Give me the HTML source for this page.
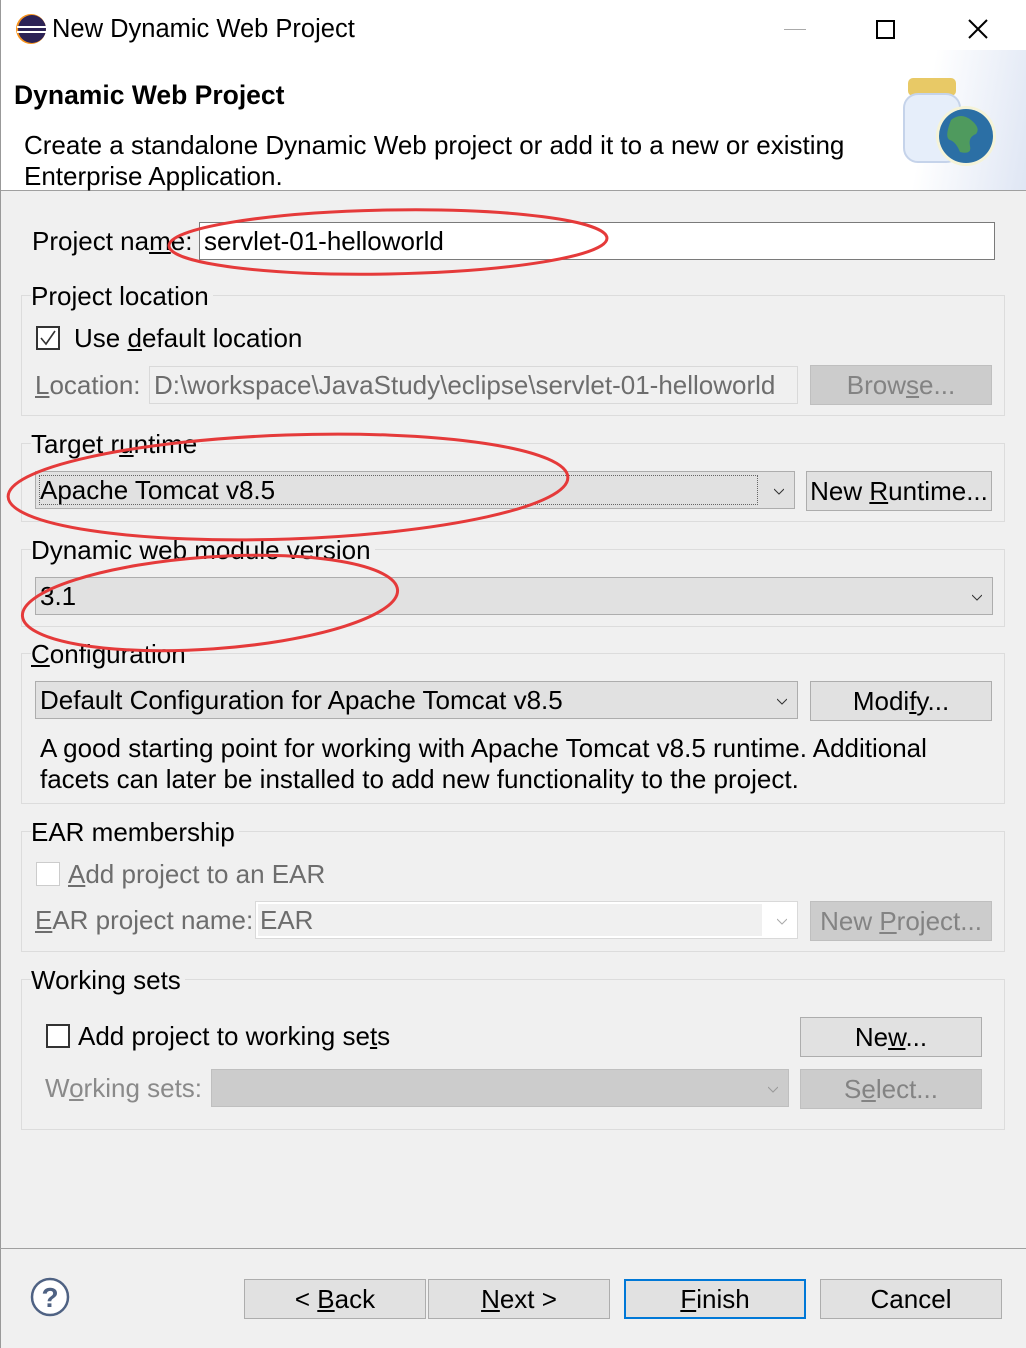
<!DOCTYPE html>
<html><head><meta charset="utf-8"><style>
*{box-sizing:border-box;margin:0;padding:0}
body{width:1026px;height:1348px;background:#f0f0f0;font-family:"Liberation Sans",sans-serif;font-size:26px;color:#000;position:relative;overflow:hidden}
.a{position:absolute;white-space:nowrap}
.t{position:absolute;white-space:nowrap;line-height:30px;transform:translateY(-15px)}
.g{position:absolute;border:1px solid #dcdcdc;left:21px;width:984px}
.gl{position:absolute;left:31px;background:#f0f0f0;padding-right:4px;line-height:30px}
.btn{position:absolute;background:#e1e1e1;border:1px solid #adadad;text-align:center;line-height:38px}
.dis{background:#cccccc;border-color:#bfbfbf;color:#838383}
.combo{position:absolute;background:#e1e1e1;border:1px solid #adadad;padding-left:4px;line-height:36px}
.arr{position:absolute;right:10px;top:14px;width:10px;height:10px}
.gray{color:#6d6d6d}
u{text-decoration:underline;text-underline-offset:2px}
</style></head><body>
<div class="a" style="left:0;top:0;width:1026px;height:191px;background:#fff;border-bottom:1px solid #a0a0a0"></div>
<div class="a" style="left:0;top:0;width:1px;height:1348px;background:#999"></div>
<div class="a" style="left:860px;top:50px;width:166px;height:140px;background:linear-gradient(100deg,#fff 40%,#dfe6f4 100%)"></div>
<!-- title bar -->
<svg class="a" style="left:15px;top:13px" width="32" height="32"><circle cx="16" cy="16" r="15" fill="#f7941e"/><circle cx="17" cy="16" r="14" fill="#2c2255"/><rect x="2" y="13" width="30" height="2" fill="#fff"/><rect x="2" y="18" width="30" height="2" fill="#fff"/></svg>
<div class="t" style="left:52px;top:29px;font-size:25.5px">New Dynamic Web Project</div>
<div class="a" style="left:784px;top:29px;width:22px;height:1px;background:#aaa"></div>
<div class="a" style="left:876px;top:20px;width:19px;height:19px;border:2px solid #000"></div>
<svg class="a" style="left:967px;top:18px" width="22" height="22"><path d="M2 2L20 20M20 2L2 20" stroke="#000" stroke-width="2"/></svg>
<div class="t" style="left:14px;top:95px;font-weight:bold;font-size:26.5px">Dynamic Web Project</div>
<div class="t" style="left:24px;top:145px">Create a standalone Dynamic Web project or add it to a new or existing</div>
<div class="t" style="left:24px;top:176px">Enterprise Application.</div>
<svg class="a" style="left:896px;top:72px" width="106" height="102">
<rect x="12" y="6" width="48" height="18" rx="5" fill="#e8c966"/>
<rect x="8" y="22" width="56" height="68" rx="14" fill="#e6eefa" stroke="#c5d3ea" stroke-width="2"/>
<circle cx="70" cy="64" r="30" fill="#f5f3d8"/>
<circle cx="70" cy="64" r="27" fill="#2b6fa5"/>
<path d="M55 48q10-8 20 0t5 14q-8 3-6 12t-10 6q-4-10-10-12t1-20z" fill="#4f9a5e"/>
</svg>
<!-- project name -->
<div class="t" style="left:32px;top:241px">Project na<u>m</u>e:</div>
<div class="a" style="left:199px;top:222px;width:796px;height:38px;background:#fff;border:1px solid #7a7a7a;padding-left:4px;line-height:36px">servlet-01-helloworld</div>
<!-- project location -->
<div class="g" style="top:295px;height:121px"></div>
<div class="gl" style="top:281px">Project location</div>
<div class="a" style="left:36px;top:326px;width:24px;height:24px;border:2px solid #333;background:#fff"></div>
<svg class="a" style="left:38px;top:328px" width="20" height="20"><path d="M3 10l5 6L17 3" stroke="#333" stroke-width="1.6" fill="none"/></svg>
<div class="t" style="left:74px;top:338px">Use <u>d</u>efault location</div>
<div class="t gray" style="left:35px;top:385px"><u>L</u>ocation:</div>
<div class="a gray" style="left:149px;top:366px;width:649px;height:38px;border:1px solid #d9d9d9;padding-left:4px;line-height:36px;overflow:hidden">D:\workspace\JavaStudy\eclipse\servlet-01-helloworld</div>
<div class="btn dis" style="left:810px;top:365px;width:182px;height:40px">Brow<u>s</u>e...</div>
<!-- target runtime -->
<div class="g" style="top:443px;height:79px"></div>
<div class="gl" style="top:429px">Target r<u>u</u>ntime</div>
<div class="combo" style="left:35px;top:471px;width:760px;height:38px"><div style="position:absolute;left:3px;top:3px;right:36px;bottom:3px;border:1px dotted #666"></div>Apache Tomcat v8.5<svg class="arr" viewBox="0 0 10 10"><path d="M0 3l5 5 5-5" stroke="#333" fill="none"/></svg></div>
<div class="btn" style="left:806px;top:471px;width:186px;height:40px">New <u>R</u>untime...</div>
<!-- module version -->
<div class="g" style="top:549px;height:78px"></div>
<div class="gl" style="top:535px">Dynamic web module version</div>
<div class="combo" style="left:35px;top:577px;width:958px;height:38px">3.1<svg class="arr" viewBox="0 0 10 10"><path d="M0 3l5 5 5-5" stroke="#333" fill="none"/></svg></div>
<!-- configuration -->
<div class="g" style="top:653px;height:151px"></div>
<div class="gl" style="top:639px"><u>C</u>onfiguration</div>
<div class="combo" style="left:35px;top:681px;width:763px;height:38px">Default Configuration for Apache Tomcat v8.5<svg class="arr" viewBox="0 0 10 10"><path d="M0 3l5 5 5-5" stroke="#333" fill="none"/></svg></div>
<div class="btn" style="left:810px;top:681px;width:182px;height:40px">Modi<u>f</u>y...</div>
<div class="t" style="left:40px;top:748px">A good starting point for working with Apache Tomcat v8.5 runtime. Additional</div>
<div class="t" style="left:40px;top:779px">facets can later be installed to add new functionality to the project.</div>
<!-- EAR -->
<div class="g" style="top:831px;height:121px"></div>
<div class="gl" style="top:817px">EAR membership</div>
<div class="a" style="left:36px;top:862px;width:24px;height:24px;border:1px solid #ccc;background:#fff"></div>
<div class="t gray" style="left:68px;top:874px"><u>A</u>dd project to an EAR</div>
<div class="t gray" style="left:35px;top:920px"><u>E</u>AR project name:</div>
<div class="a" style="left:255px;top:901px;width:543px;height:38px;border:1px solid #d9d9d9;background:#fff"><div style="position:absolute;left:2px;top:2px;width:504px;height:32px;background:#f0f0f0;padding-left:2px;line-height:32px;color:#6d6d6d">EAR</div><svg class="arr" viewBox="0 0 10 10"><path d="M0 3l5 5 5-5" stroke="#aaa" fill="none"/></svg></div>
<div class="btn dis" style="left:810px;top:901px;width:182px;height:40px">New <u>P</u>roject...</div>
<!-- working sets -->
<div class="g" style="top:979px;height:151px"></div>
<div class="gl" style="top:965px">Working sets</div>
<div class="a" style="left:46px;top:1024px;width:24px;height:24px;border:2px solid #333;background:#fff"></div>
<div class="t" style="left:78px;top:1036px">Add project to working se<u>t</u>s</div>
<div class="btn" style="left:800px;top:1017px;width:182px;height:40px">Ne<u>w</u>...</div>
<div class="t gray" style="left:45px;top:1088px;color:#8a8a8a">W<u>o</u>rking sets:</div>
<div class="a" style="left:211px;top:1069px;width:578px;height:38px;background:#cccccc;border:1px solid #bfbfbf"><svg class="arr" viewBox="0 0 10 10"><path d="M0 3l5 5 5-5" stroke="#999" fill="none"/></svg></div>
<div class="btn dis" style="left:800px;top:1069px;width:182px;height:40px">S<u>e</u>lect...</div>
<!-- bottom -->
<div class="a" style="left:0;top:1248px;width:1026px;height:1px;background:#a0a0a0"></div>
<svg class="a" style="left:30px;top:1277px" width="42" height="42"><circle cx="20" cy="20" r="18" fill="#fff" stroke="#4f6283" stroke-width="2.5"/><text x="20" y="30" text-anchor="middle" font-family="Liberation Sans" font-size="28" font-weight="bold" fill="#4f6283">?</text></svg>
<div class="btn" style="left:244px;top:1279px;width:182px;height:40px">&lt; <u>B</u>ack</div>
<div class="btn" style="left:428px;top:1279px;width:182px;height:40px"><u>N</u>ext &gt;</div>
<div class="btn" style="left:624px;top:1279px;width:182px;height:40px;border:2px solid #0078d7;line-height:36px"><u>F</u>inish</div>
<div class="btn" style="left:820px;top:1279px;width:182px;height:40px">Cancel</div>
<!-- red ellipses -->
<svg class="a" style="left:0;top:0" width="1026" height="1348">
<ellipse cx="388" cy="242" rx="219" ry="32" fill="none" stroke="#e53a3a" stroke-width="3" transform="rotate(-1 388 242)"/>
<ellipse cx="288" cy="487" rx="280" ry="52" fill="none" stroke="#e53a3a" stroke-width="3" transform="rotate(-2 288 487)"/>
<ellipse cx="210" cy="603" rx="188" ry="46" fill="none" stroke="#e53a3a" stroke-width="3" transform="rotate(-4 210 603)"/>
</svg>
</body></html>
